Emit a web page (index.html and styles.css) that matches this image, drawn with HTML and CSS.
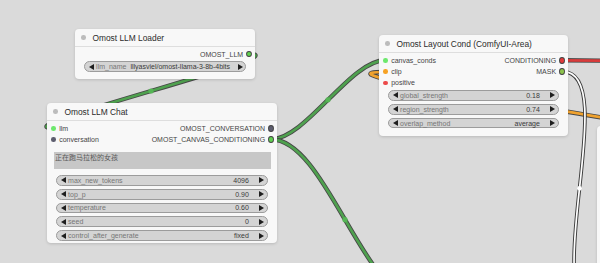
FILE: index.html
```html
<!DOCTYPE html>
<html>
<head>
<meta charset="utf-8">
<link rel="stylesheet" href="styles.css">
</head>
<body>
<div class="canvas">
  <svg class="links" width="600" height="263" viewBox="0 0 600 263">
    <path class="lb" d="M700,140 C780,140 280,72 385,72"/>
    <path class="li orange" d="M700,140 C780,140 280,72 385,72"/>
    <path class="lb" d="M249,54 C303,54 -1,128 53,128"/>
    <path class="li green" d="M249,54 C303,54 -1,128 53,128"/>
    <path class="lb" d="M271,139.3 C305.7,139.3 350.3,60.3 385,60.3"/>
    <path class="li green" d="M271,139.3 C305.7,139.3 350.3,60.3 385,60.3"/>
    <path class="lb" d="M271,139.3 C325.7,139.3 364.3,300 419,300"/>
    <path class="li green" d="M271,139.3 C325.7,139.3 364.3,300 419,300"/>
    <path class="lb" d="M563,60.3 L640,61"/>
    <path class="li red" d="M563,60.3 L640,61"/>
    <path class="lbw" d="M563,71.7 C622,71.7 537,305 596,305"/>
    <path class="liw" d="M563,71.7 C622,71.7 537,305 596,305"/>
    <circle class="mk green" cx="151" cy="91" r="2.6"/>
    <circle class="mk green" cx="328" cy="99.8" r="2.6"/>
    <circle class="mk green" cx="345" cy="219.7" r="2.6"/>
    <circle class="mkw" cx="579.5" cy="188.3" r="2.4"/>
  </svg>

  <div class="node n-loader">
    <div class="title"><span class="tdot"></span><span>Omost LLM Loader</span></div>
    <div class="slots s-loader">
      <div class="slot in"></div>
      <div class="slot out"><span>OMOST_LLM</span><i class="dot c-green ring"></i></div>
    </div>
    <div class="widgets w-loader">
      <div class="widget"><span class="arr l"></span><span class="wl">llm_name</span><span class="wv">lllyasviel/omost-llama-3-8b-4bits</span><span class="arr r"></span></div>
    </div>
  </div>

  <div class="node n-chat">
    <div class="title"><span class="tdot"></span><span>Omost LLM Chat</span></div>
    <div class="slots s-chat">
      <div class="slot in"><i class="dot c-lgreen"></i><span>llm</span></div>
      <div class="slot out"><span>OMOST_CONVERSATION</span><i class="dot c-slate ring"></i></div>
      <div class="slot in"><i class="dot c-slate"></i><span>conversation</span></div>
      <div class="slot out"><span>OMOST_CANVAS_CONDITIONING</span><i class="dot c-green ring"></i></div>
    </div>
    <div class="textarea">正在跑马拉松的女孩</div>
    <div class="widgets w-chat">
      <div class="widget"><span class="arr l"></span><span class="wl">max_new_tokens</span><span class="wv">4096</span><span class="arr r"></span></div>
      <div class="widget"><span class="arr l"></span><span class="wl">top_p</span><span class="wv">0.90</span><span class="arr r"></span></div>
      <div class="widget"><span class="arr l"></span><span class="wl">temperature</span><span class="wv">0.60</span><span class="arr r"></span></div>
      <div class="widget"><span class="arr l"></span><span class="wl">seed</span><span class="wv">0</span><span class="arr r"></span></div>
      <div class="widget"><span class="arr l"></span><span class="wl">control_after_generate</span><span class="wv">fixed</span><span class="arr r"></span></div>
    </div>
  </div>

  <div class="node n-layout">
    <div class="title"><span class="tdot"></span><span>Omost Layout Cond (ComfyUI-Area)</span></div>
    <div class="slots s-layout">
      <div class="slot in"><i class="dot c-lgreen"></i><span>canvas_conds</span></div>
      <div class="slot out"><span>CONDITIONING</span><i class="dot c-red ring"></i></div>
      <div class="slot in"><i class="dot c-orange"></i><span>clip</span></div>
      <div class="slot out"><span>MASK</span><i class="dot c-olive ring"></i></div>
      <div class="slot in"><i class="dot c-pred"></i><span>positive</span></div>
      <div class="slot out"></div>
    </div>
    <div class="widgets w-layout">
      <div class="widget"><span class="arr l"></span><span class="wl">global_strength</span><span class="wv">0.18</span><span class="arr r"></span></div>
      <div class="widget"><span class="arr l"></span><span class="wl">region_strength</span><span class="wv">0.74</span><span class="arr r"></span></div>
      <div class="widget"><span class="arr l"></span><span class="wl">overlap_method</span><span class="wv">average</span><span class="arr r"></span></div>
    </div>
  </div>

  <div class="node n-edge"></div>
</div>
</body>
</html>
```

FILE: styles.css
```css
* { box-sizing: border-box; margin: 0; padding: 0; }
html, body { width: 600px; height: 263px; overflow: hidden; }
body {
  background: #dadada;
  font-family: "Liberation Sans", Arial, sans-serif;
}
.canvas {
  position: relative;
  width: 600px;
  height: 263px;
  overflow: hidden;
}
.links { position: absolute; left: 0; top: 0; }
.lb { fill: none; stroke: #474747; stroke-width: 4.4; }
.li { fill: none; stroke-width: 2.7; }
.li.green { stroke: #4fa14f; }
.li.orange { stroke: #f0a22e; }
.li.red { stroke: #d83c3c; }
.lbw { fill: none; stroke: #3c3c3c; stroke-width: 3.6; }
.liw { fill: none; stroke: #ffffff; stroke-width: 1.7; }
.mk.green { fill: #55b555; }
.mkw { fill: #ffffff; }

.node {
  position: absolute;
  background: #f8f8f8;
  border-radius: 4px;
  box-shadow: 0 1px 3px rgba(0, 0, 0, 0.15);
  display: flex;
  flex-direction: column;
}
.n-loader { left: 75px; top: 29px; width: 180px; height: 50px; }
.n-chat { left: 47px; top: 103px; width: 230px; height: 140px; }
.n-layout { left: 379px; top: 35px; width: 189px; height: 101px; }
.n-edge { left: 597px; top: 126px; width: 30px; height: 160px; }

.title {
  height: 18px;
  border-bottom: 1px solid #dedede;
  display: flex;
  align-items: center;
  gap: 6.5px;
  padding-left: 6.3px;
  font-size: 8.4px;
  color: #2b2b2b;
  white-space: nowrap;
}
.tdot {
  width: 4.6px;
  height: 4.6px;
  border-radius: 50%;
  background: #bcbcbc;
}

.slots {
  display: grid;
  grid-template-columns: 1fr auto;
  font-size: 7px;
  color: #444;
}
.s-loader { grid-auto-rows: 11px; padding-top: 1.5px; }
.s-chat { grid-auto-rows: 11px; padding-top: 1.8px; }
.s-layout { grid-auto-rows: 11.35px; padding-top: 1.6px; }
.slot {
  display: flex;
  align-items: center;
  gap: 3.6px;
  white-space: nowrap;
}
.slot.in { padding-left: 4px; }
.slot.out { padding-right: 3.7px; justify-content: flex-end; }
.dot {
  display: block;
  width: 4.6px;
  height: 4.6px;
  border-radius: 50%;
}
.ring { box-shadow: 0 0 0 0.9px #3e3e3e; }
.c-green { background: #5fcf4f; }
.c-lgreen { background: #6de86d; }
.c-slate { background: #5d5d6e; }
.c-red { background: #e03a3a; }
.c-pred { background: #ec4a4a; }
.c-orange { background: #f6a224; }
.c-olive { background: #8cc24c; }

.textarea {
  margin: 7.5px 6px 0 7px;
  height: 16.7px;
  background: #c7c7c7;
  font-family: "Noto Sans CJK SC", "Liberation Serif", serif;
  font-size: 7px;
  line-height: 8px;
  color: #5a5a5a;
  padding: 1px 1px;
}

.widgets {
  display: flex;
  flex-direction: column;
  gap: 3px;
  padding: 0 8.8px 0 8.5px;
}
.w-loader { margin-top: 1.5px; }
.w-chat { margin-top: 6px; }
.w-layout { margin-top: 1.4px; }
.w-loader .widget { height: 11px; }
.w-loader .wl { margin-right: 4px; }
.w-loader .wv { margin-right: 7.5px; }
.widget {
  height: 10.8px;
  border: 1px solid #9c9c9c;
  border-radius: 6px;
  background: #d4d4d4;
  display: flex;
  align-items: center;
  padding: 0 3.6px 0 4px;
  font-size: 7px;
  white-space: nowrap;
}
.wl { color: #767676; margin-left: 2.6px; }
.wv { color: #3a3a3a; margin-left: auto; margin-right: 9.8px; }
.arr {
  flex: none;
  width: 0;
  height: 0;
  border-top: 3px solid transparent;
  border-bottom: 3px solid transparent;
}
.arr.l { border-right: 5px solid #1e1e1e; }
.arr.r { border-left: 5px solid #1e1e1e; }
```
